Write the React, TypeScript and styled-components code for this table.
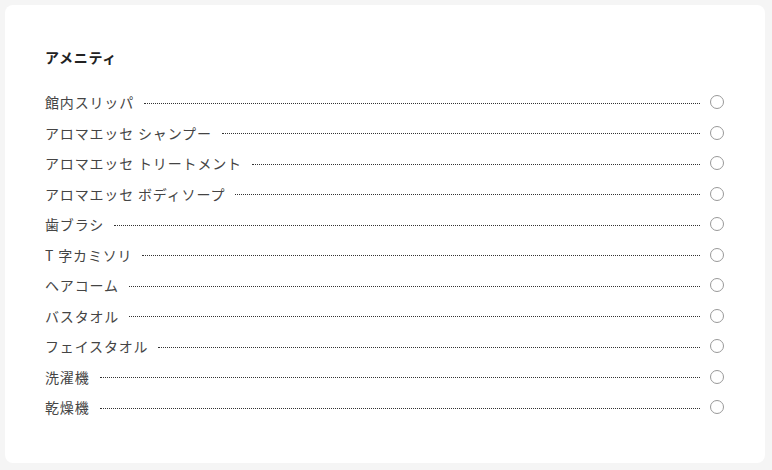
import styled, { createGlobalStyle } from "styled-components";

const GlobalStyle = createGlobalStyle`
  html, body {
    margin: 0;
    padding: 0;
    background: #f5f5f5;
  }
  body {
    padding: 5px;
    font-family: "Noto Sans CJK JP", "Noto Sans", sans-serif;
    color: #333;
  }
`;

const amenities = [
  "館内スリッパ",
  "アロマエッセ シャンプー",
  "アロマエッセ トリートメント",
  "アロマエッセ ボディソープ",
  "歯ブラシ",
  "T 字カミソリ",
  "ヘアコーム",
  "バスタオル",
  "フェイスタオル",
  "洗濯機",
  "乾燥機",
];

export default function App() {
  return (
    <>
      <GlobalStyle />
      <Card>
        <Title>アメニティ</Title>
        <List>
          {amenities.map((name) => (
            <Row key={name}>
              <Label>{name}</Label>
              <Leader />
              <Mark />
            </Row>
          ))}
        </List>
      </Card>
    </>
  );
}

// STYLES

const Card = styled.div`
  box-sizing: border-box;
  width: 760px;
  height: 458px;
  padding: 40px 41px 0 40px;
  background: #fff;
  border-radius: 8px;
`;

const Title = styled.h2`
  margin: 0 0 18px;
  font-size: 14px;
  line-height: 24px;
  font-weight: 700;
  letter-spacing: 0.05em;
  color: #222;
`;

const List = styled.ul`
  list-style: none;
  margin: 0;
  padding: 0;
`;

const Row = styled.li`
  display: flex;
  align-items: center;
  height: 30.5px;
  font-size: 14px;
`;

const Label = styled.span`
  flex: none;
  line-height: 20px;
  letter-spacing: 0.06em;
  color: #444;
`;

const Leader = styled.span`
  flex: 1;
  margin: 2px 10px 0 10px;
  border-bottom: 1px dotted #333;
`;

const Mark = styled.span`
  flex: none;
  box-sizing: border-box;
  width: 14px;
  height: 14px;
  border: 1px solid #999;
  border-radius: 50%;
`;
